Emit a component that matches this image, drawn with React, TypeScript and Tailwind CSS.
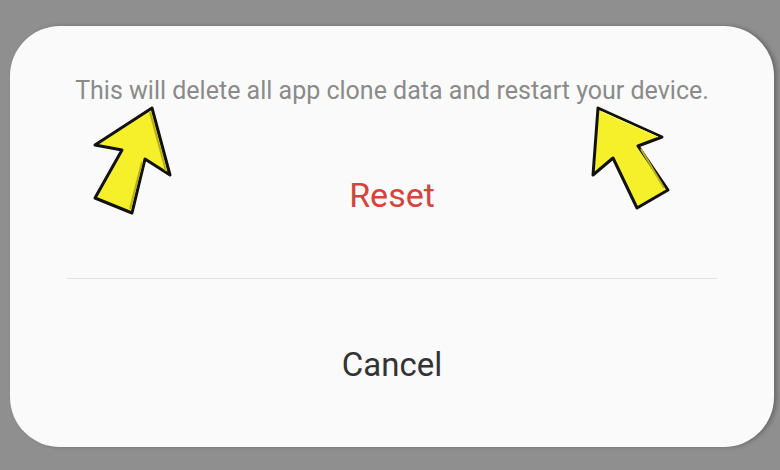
import React from "react";

export default function App() {
  return (
    <div
      className="relative w-[780px] h-[470px] bg-[#8f8f8f] pl-[10px] pt-[26px] pr-[6px] pb-[23px]"
      style={{ fontFamily: "Roboto, 'Noto Sans', sans-serif" }}
    >
      <div className="h-full rounded-[50px] bg-[#fafafa] flex flex-col shadow-[3px_0_4px_rgba(0,0,0,0.25)]">
        <div className="pt-[50px] text-center text-[25px] leading-[30px] text-[#8a8a8a] whitespace-nowrap">
          This will delete all app clone data and restart your device.
        </div>
        <div className="h-[172px] flex items-center justify-center pt-[6px] text-[34px] text-[#d4443f]">
          Reset
        </div>
        <div className="mx-[57px] h-px bg-[#e2e2e2]" />
        <div className="flex-1 flex items-center justify-center pt-[4px] text-[33px] text-[#333333]">
          Cancel
        </div>
      </div>
      <svg
        className="absolute left-0 top-0 pointer-events-none"
        width="780"
        height="470"
        viewBox="0 0 780 470"
      >
        <polygon
          points="152,108 170,175 145,159 132,213 95,198 122,150 95,145"
          fill="#f5f02a"
          stroke="#111"
          strokeWidth="3"
          strokeLinejoin="round"
        />
        <polyline points="150,112 166,171" fill="none" stroke="#b5ae1e" strokeWidth="2" />
        <polyline points="142,162 130,209" fill="none" stroke="#b5ae1e" strokeWidth="2" />
        <polygon
          points="598,108 662,137 638,146 668,190 637,208 613,158 593,175"
          fill="#f5f02a"
          stroke="#111"
          strokeWidth="3"
          strokeLinejoin="round"
        />
        <polyline points="641,149 664,188" fill="none" stroke="#b5ae1e" strokeWidth="2" />
        <polyline points="602,112 658,137" fill="none" stroke="#fbf86a" strokeWidth="1" />
      </svg>
    </div>
  );
}
